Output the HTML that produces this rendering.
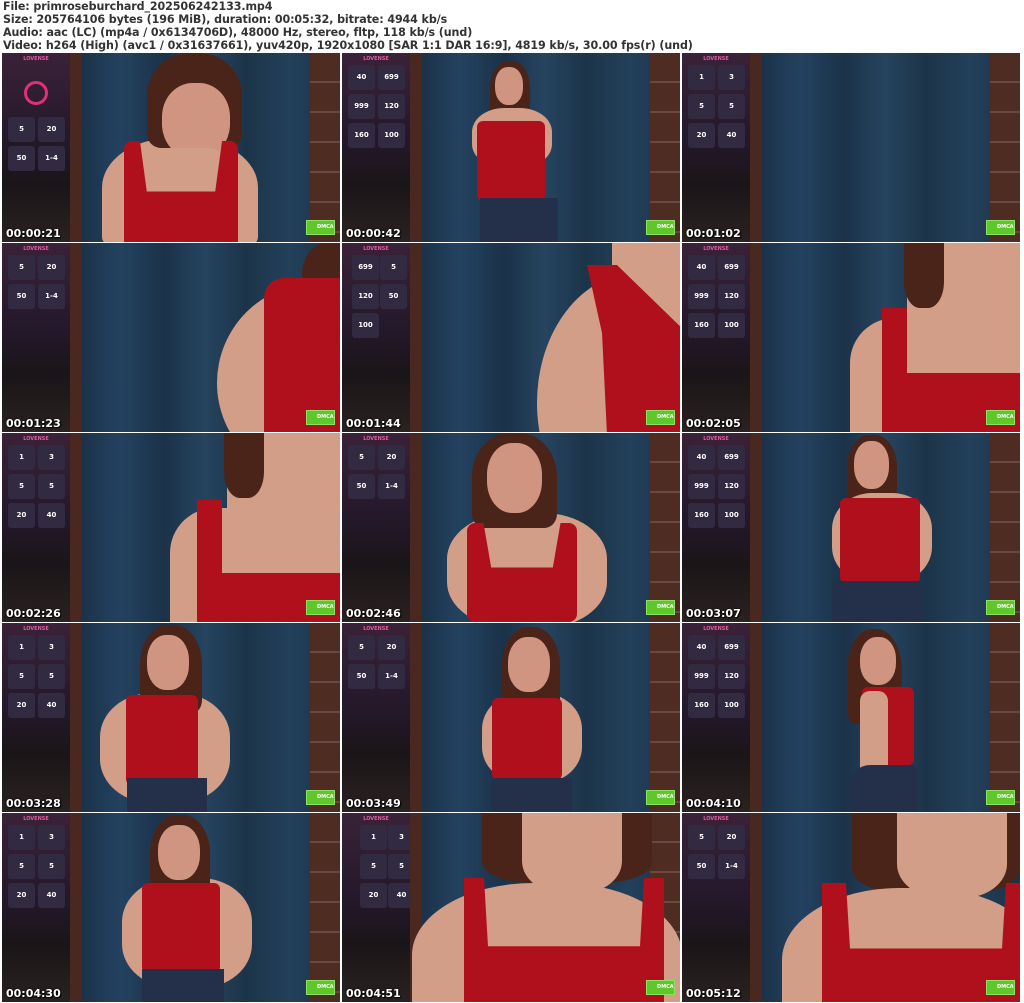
<!DOCTYPE html>
<html><head><meta charset="utf-8"><style>
*{margin:0;padding:0;box-sizing:border-box}
body{width:1024px;height:1003px;background:#fff;position:relative;overflow:hidden;font-family:"DejaVu Sans","Liberation Sans",sans-serif}
.hd{position:absolute;left:3px;top:0;font-size:11.1px;line-height:13px;color:#333;font-weight:bold;white-space:nowrap;letter-spacing:-0.1px}
.t{position:absolute;width:338px;height:189px;overflow:hidden;background:linear-gradient(90deg,#1c3248 0%,#244460 12%,#1a3046 22%,#234260 35%,#1b3249 48%,#26445f 60%,#1c3449 72%,#23405a 85%,#1c3248 100%)}
.t div{position:absolute}
.p{left:0;top:0;width:68px;height:189px;background:linear-gradient(180deg,#3a2238 0%,#24182a 45%,#1a1518 70%,#2a2220 100%)}
.p .lv{left:0;top:3px;width:68px;text-align:center;font-size:5px;color:#e05aa0;font-weight:bold}
.p .c{width:27px;height:25px;background:#322a40;border-radius:3px;color:#fff;font-size:7px;font-weight:bold;text-align:center;line-height:25px}
.bk{left:68px;top:0;width:12px;height:189px;background:#4a2820}
.br{right:0;top:0;width:30px;height:189px;background:repeating-linear-gradient(180deg,#4e2c22 0,#4e2c22 28px,#6a4a40 28px,#6a4a40 30px)}
.ts{left:4px;bottom:2px;color:#fff;font-size:11px;font-weight:bold;text-shadow:0 0 2px #000,1px 1px 1px #000}
.dm{left:304px;top:167px;width:29px;height:15px;background:#5ec82a;border:1px solid #8de060;color:#fff;font-size:5px;font-weight:bold;padding:3px 0 0 10px;overflow:hidden}
.h{background:#4a2418}.f{background:#cf9580}.s{background:#d29e88}.r{background:#b0101c}.j{background:#24304a}
</style></head><body>
<div class="hd">File: primroseburchard_202506242133.mp4<br>Size: 205764106 bytes (196 MiB), duration: 00:05:32, bitrate: 4944 kb/s<br>Audio: aac (LC) (mp4a / 0x6134706D), 48000 Hz, stereo, fltp, 118 kb/s (und)<br>Video: h264 (High) (avc1 / 0x31637661), yuv420p, 1920x1080 [SAR 1:1 DAR 16:9], 4819 kb/s, 30.00 fps(r) (und)</div>

<!-- Row 1 -->
<div class="t" style="left:2px;top:53px">
<div class="p"><div class="lv">LOVENSE</div><div style="left:22px;top:28px;width:24px;height:24px;border:3px solid #e0307a;border-radius:50%"></div><div class="c" style="left:6px;top:64px">5</div><div class="c" style="left:36px;top:64px">20</div><div class="c" style="left:6px;top:93px">50</div><div class="c" style="left:36px;top:93px">1-4</div></div>
<div class="bk"></div><div class="br"></div>
<div class="s" style="left:100px;top:85px;width:156px;height:110px;border-radius:45% 45% 10% 10%"></div>
<div class="h" style="left:145px;top:0;width:95px;height:95px;border-radius:45% 45% 15% 15%"></div>
<div class="f" style="left:160px;top:30px;width:68px;height:75px;border-radius:45%"></div>
<div class="s" style="left:140px;top:95px;width:90px;height:60px;border-radius:30%"></div>
<div class="r" style="left:122px;top:88px;width:114px;height:101px;border-radius:8px 8px 0 0;clip-path:polygon(0 0,14% 0,20% 50%,80% 50%,86% 0,100% 0,100% 100%,0 100%)"></div>
<div class="ts">00:00:21</div><div class="dm">DMCA</div></div>

<div class="t" style="left:342px;top:53px">
<div class="p"><div class="lv">LOVENSE</div><div class="c" style="left:6px;top:12px">40</div><div class="c" style="left:36px;top:12px">699</div><div class="c" style="left:6px;top:41px">999</div><div class="c" style="left:36px;top:41px">120</div><div class="c" style="left:6px;top:70px">160</div><div class="c" style="left:36px;top:70px">100</div></div>
<div class="bk"></div><div class="br"></div>
<div class="h" style="left:148px;top:8px;width:40px;height:60px;border-radius:45% 45% 20% 20%"></div>
<div class="f" style="left:153px;top:14px;width:28px;height:38px;border-radius:45%"></div>
<div class="s" style="left:130px;top:55px;width:80px;height:60px;border-radius:40%"></div>
<div class="r" style="left:135px;top:68px;width:68px;height:80px;border-radius:6px"></div>
<div class="j" style="left:138px;top:145px;width:78px;height:44px"></div>
<div class="ts">00:00:42</div><div class="dm">DMCA</div></div>

<div class="t" style="left:682px;top:53px">
<div class="p"><div class="lv">LOVENSE</div><div class="c" style="left:6px;top:12px">1</div><div class="c" style="left:36px;top:12px">3</div><div class="c" style="left:6px;top:41px">5</div><div class="c" style="left:36px;top:41px">5</div><div class="c" style="left:6px;top:70px">20</div><div class="c" style="left:36px;top:70px">40</div></div>
<div class="bk"></div><div class="br"></div>
<div class="ts">00:01:02</div><div class="dm">DMCA</div></div>

<!-- Row 2 -->
<div class="t" style="left:2px;top:243px">
<div class="p"><div class="lv">LOVENSE</div><div class="c" style="left:6px;top:12px">5</div><div class="c" style="left:36px;top:12px">20</div><div class="c" style="left:6px;top:41px">50</div><div class="c" style="left:36px;top:41px">1-4</div></div>
<div class="bk"></div>
<div class="h" style="left:300px;top:0;width:60px;height:80px;border-radius:40%"></div>
<div class="s" style="left:215px;top:40px;width:200px;height:200px;border-radius:50%"></div>
<div class="r" style="left:262px;top:35px;width:90px;height:160px;border-radius:20px 0 0 0"></div>
<div class="ts">00:01:23</div><div class="dm">DMCA</div></div>

<div class="t" style="left:342px;top:243px">
<div class="p"><div class="lv">LOVENSE</div><div class="c" style="left:10px;top:12px">699</div><div class="c" style="left:38px;top:12px">5</div><div class="c" style="left:10px;top:41px">120</div><div class="c" style="left:38px;top:41px">50</div><div class="c" style="left:10px;top:70px">100</div></div>
<div class="bk"></div>
<div class="s" style="left:195px;top:30px;width:200px;height:260px;border-radius:50%"></div>
<div class="s" style="left:270px;top:0;width:70px;height:60px"></div>
<div class="r" style="left:245px;top:22px;width:100px;height:170px;clip-path:polygon(0 0,30% 0,100% 40%,100% 100%,20% 100%,15% 40%)"></div>
<div class="ts">00:01:44</div><div class="dm">DMCA</div></div>

<div class="t" style="left:682px;top:243px">
<div class="p"><div class="lv">LOVENSE</div><div class="c" style="left:6px;top:12px">40</div><div class="c" style="left:36px;top:12px">699</div><div class="c" style="left:6px;top:41px">999</div><div class="c" style="left:36px;top:41px">120</div><div class="c" style="left:6px;top:70px">160</div><div class="c" style="left:36px;top:70px">100</div></div>
<div class="bk"></div>
<div class="s" style="left:168px;top:75px;width:220px;height:130px;border-radius:45px 0 0 0"></div>
<div class="s" style="left:225px;top:0;width:113px;height:140px"></div>
<div class="h" style="left:222px;top:0;width:40px;height:65px;border-radius:0 0 40% 40%"></div>
<div class="r" style="left:200px;top:65px;width:25px;height:124px"></div>
<div class="r" style="left:200px;top:130px;width:138px;height:59px"></div>
<div class="ts">00:02:05</div><div class="dm">DMCA</div></div>

<!-- Row 3 -->
<div class="t" style="left:2px;top:433px">
<div class="p"><div class="lv">LOVENSE</div><div class="c" style="left:6px;top:12px">1</div><div class="c" style="left:36px;top:12px">3</div><div class="c" style="left:6px;top:41px">5</div><div class="c" style="left:36px;top:41px">5</div><div class="c" style="left:6px;top:70px">20</div><div class="c" style="left:36px;top:70px">40</div></div>
<div class="bk"></div>
<div class="s" style="left:168px;top:75px;width:220px;height:130px;border-radius:45px 0 0 0"></div>
<div class="s" style="left:225px;top:0;width:113px;height:140px"></div>
<div class="h" style="left:222px;top:0;width:40px;height:65px;border-radius:0 0 40% 40%"></div>
<div class="r" style="left:195px;top:67px;width:25px;height:122px"></div>
<div class="r" style="left:195px;top:140px;width:143px;height:49px"></div>
<div class="ts">00:02:26</div><div class="dm">DMCA</div></div>

<div class="t" style="left:342px;top:433px">
<div class="p"><div class="lv">LOVENSE</div><div class="c" style="left:6px;top:12px">5</div><div class="c" style="left:36px;top:12px">20</div><div class="c" style="left:6px;top:41px">50</div><div class="c" style="left:36px;top:41px">1-4</div></div>
<div class="bk"></div><div class="br"></div>
<div class="s" style="left:105px;top:80px;width:160px;height:115px;border-radius:40%"></div>
<div class="h" style="left:130px;top:0;width:85px;height:95px;border-radius:45% 45% 15% 15%"></div>
<div class="f" style="left:145px;top:10px;width:55px;height:70px;border-radius:45%"></div>
<div class="r" style="left:125px;top:90px;width:110px;height:99px;border-radius:8px;clip-path:polygon(0 0,15% 0,22% 45%,78% 45%,85% 0,100% 0,100% 100%,0 100%)"></div>
<div class="ts">00:02:46</div><div class="dm">DMCA</div></div>

<div class="t" style="left:682px;top:433px">
<div class="p"><div class="lv">LOVENSE</div><div class="c" style="left:6px;top:12px">40</div><div class="c" style="left:36px;top:12px">699</div><div class="c" style="left:6px;top:41px">999</div><div class="c" style="left:36px;top:41px">120</div><div class="c" style="left:6px;top:70px">160</div><div class="c" style="left:36px;top:70px">100</div></div>
<div class="bk"></div><div class="br"></div>
<div class="h" style="left:165px;top:2px;width:50px;height:70px;border-radius:45% 45% 20% 20%"></div>
<div class="f" style="left:172px;top:8px;width:35px;height:48px;border-radius:45%"></div>
<div class="s" style="left:150px;top:60px;width:100px;height:90px;border-radius:40%"></div>
<div class="r" style="left:158px;top:65px;width:80px;height:85px;border-radius:6px"></div>
<div class="j" style="left:150px;top:148px;width:90px;height:41px"></div>
<div class="ts">00:03:07</div><div class="dm">DMCA</div></div>

<!-- Row 4 -->
<div class="t" style="left:2px;top:623px">
<div class="p"><div class="lv">LOVENSE</div><div class="c" style="left:6px;top:12px">1</div><div class="c" style="left:36px;top:12px">3</div><div class="c" style="left:6px;top:41px">5</div><div class="c" style="left:36px;top:41px">5</div><div class="c" style="left:6px;top:70px">20</div><div class="c" style="left:36px;top:70px">40</div></div>
<div class="bk"></div><div class="br"></div>
<div class="s" style="left:98px;top:70px;width:130px;height:110px;border-radius:40%"></div>
<div class="h" style="left:138px;top:2px;width:62px;height:88px;border-radius:45% 45% 15% 15%"></div>
<div class="f" style="left:145px;top:12px;width:42px;height:55px;border-radius:45%"></div>
<div class="r" style="left:124px;top:72px;width:72px;height:90px;border-radius:6px"></div>
<div class="j" style="left:125px;top:155px;width:80px;height:34px"></div>
<div class="ts">00:03:28</div><div class="dm">DMCA</div></div>

<div class="t" style="left:342px;top:623px">
<div class="p"><div class="lv">LOVENSE</div><div class="c" style="left:6px;top:12px">5</div><div class="c" style="left:36px;top:12px">20</div><div class="c" style="left:6px;top:41px">50</div><div class="c" style="left:36px;top:41px">1-4</div></div>
<div class="bk"></div><div class="br"></div>
<div class="s" style="left:140px;top:70px;width:100px;height:90px;border-radius:40%"></div>
<div class="h" style="left:160px;top:4px;width:58px;height:85px;border-radius:45% 45% 15% 15%"></div>
<div class="f" style="left:166px;top:14px;width:42px;height:55px;border-radius:45%"></div>
<div class="r" style="left:150px;top:75px;width:70px;height:82px;border-radius:6px"></div>
<div class="j" style="left:150px;top:155px;width:80px;height:34px"></div>
<div class="ts">00:03:49</div><div class="dm">DMCA</div></div>

<div class="t" style="left:682px;top:623px">
<div class="p"><div class="lv">LOVENSE</div><div class="c" style="left:6px;top:12px">40</div><div class="c" style="left:36px;top:12px">699</div><div class="c" style="left:6px;top:41px">999</div><div class="c" style="left:36px;top:41px">120</div><div class="c" style="left:6px;top:70px">160</div><div class="c" style="left:36px;top:70px">100</div></div>
<div class="bk"></div><div class="br"></div>
<div class="h" style="left:165px;top:6px;width:55px;height:95px;border-radius:45% 45% 15% 15%"></div>
<div class="f" style="left:178px;top:14px;width:36px;height:48px;border-radius:45%"></div>
<div class="r" style="left:180px;top:64px;width:52px;height:78px;border-radius:6px"></div>
<div class="s" style="left:178px;top:68px;width:28px;height:90px;border-radius:10px"></div>
<div class="j" style="left:168px;top:142px;width:68px;height:47px;border-radius:20px 8px 0 0"></div>
<div class="ts">00:04:10</div><div class="dm">DMCA</div></div>

<!-- Row 5 -->
<div class="t" style="left:2px;top:813px">
<div class="p"><div class="lv">LOVENSE</div><div class="c" style="left:6px;top:12px">1</div><div class="c" style="left:36px;top:12px">3</div><div class="c" style="left:6px;top:41px">5</div><div class="c" style="left:36px;top:41px">5</div><div class="c" style="left:6px;top:70px">20</div><div class="c" style="left:36px;top:70px">40</div></div>
<div class="bk"></div><div class="br"></div>
<div class="s" style="left:120px;top:65px;width:130px;height:110px;border-radius:40%"></div>
<div class="h" style="left:148px;top:2px;width:60px;height:85px;border-radius:45% 45% 15% 15%"></div>
<div class="f" style="left:156px;top:12px;width:42px;height:55px;border-radius:45%"></div>
<div class="r" style="left:140px;top:70px;width:78px;height:90px;border-radius:6px"></div>
<div class="j" style="left:140px;top:156px;width:82px;height:33px"></div>
<div class="ts">00:04:30</div><div class="dm">DMCA</div></div>

<div class="t" style="left:342px;top:813px">
<div class="p"><div class="lv">LOVENSE</div><div class="c" style="left:18px;top:12px">1</div><div class="c" style="left:46px;top:12px">3</div><div class="c" style="left:18px;top:41px">5</div><div class="c" style="left:46px;top:41px">5</div><div class="c" style="left:18px;top:70px">20</div><div class="c" style="left:46px;top:70px">40</div></div>
<div class="bk"></div><div class="br"></div>
<div class="h" style="left:140px;top:0;width:170px;height:70px;border-radius:0 0 30% 30%"></div>
<div class="s" style="left:70px;top:70px;width:270px;height:160px;border-radius:45% 45% 0 0"></div>
<div class="s" style="left:180px;top:0;width:100px;height:80px;border-radius:0 0 40% 40%"></div>
<div class="r" style="left:122px;top:65px;width:200px;height:124px;clip-path:polygon(0 0,10% 0,12% 55%,88% 55%,90% 0,100% 0,100% 100%,0 100%)"></div>
<div class="ts">00:04:51</div><div class="dm">DMCA</div></div>

<div class="t" style="left:682px;top:813px">
<div class="p"><div class="lv">LOVENSE</div><div class="c" style="left:6px;top:12px">5</div><div class="c" style="left:36px;top:12px">20</div><div class="c" style="left:6px;top:41px">50</div><div class="c" style="left:36px;top:41px">1-4</div></div>
<div class="bk"></div>
<div class="h" style="left:170px;top:0;width:168px;height:80px;border-radius:0 0 30% 30%"></div>
<div class="s" style="left:100px;top:75px;width:260px;height:160px;border-radius:45% 45% 0 0"></div>
<div class="s" style="left:215px;top:0;width:110px;height:85px;border-radius:0 0 40% 40%"></div>
<div class="r" style="left:140px;top:70px;width:200px;height:119px;clip-path:polygon(0 0,12% 0,14% 55%,90% 55%,92% 0,100% 0,100% 100%,0 100%)"></div>
<div class="ts">00:05:12</div><div class="dm">DMCA</div></div>
</body></html>
